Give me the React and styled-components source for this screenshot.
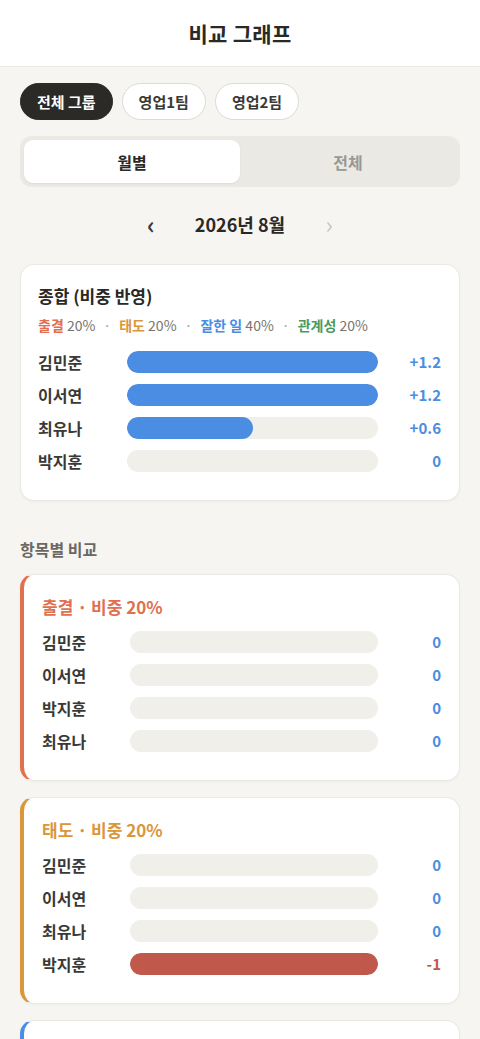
import React from "react";
import styled, { createGlobalStyle } from "styled-components";

const Global = createGlobalStyle`
  html, body { margin: 0; padding: 0; background: #f6f5f2; }
  body { font-family: "Noto Sans CJK KR", "Noto Sans", sans-serif; color: #2a2925; }
  * { box-sizing: border-box; }
`;

const Page = styled.div`
  width: 480px;
  min-height: 1039px;
  background: #f6f5f2;
`;

const Header = styled.header`
  height: 67px;
  background: #fff;
  border-bottom: 1px solid #ebe9e4;
  display: flex;
  align-items: center;
  justify-content: center;
`;

const Title = styled.h1`
  margin: 0;
  font-size: 21px;
  font-weight: 700;
  color: #2a2925;
  letter-spacing: 0.3px;
`;

const Content = styled.main`
  padding: 16px 20px 0;
  display: flex;
  flex-direction: column;
`;

const ChipRow = styled.div`
  display: flex;
  gap: 9px;
`;

const Chip = styled.button`
  height: 37px;
  padding: 0 16px;
  border-radius: 19px;
  font-family: inherit;
  font-size: 15px;
  font-weight: 700;
  border: 1px solid ${p => (p.$active ? "#2b2a26" : "#dddad4")};
  background: ${p => (p.$active ? "#2b2a26" : "#fff")};
  color: ${p => (p.$active ? "#fff" : "#3a3935")};
`;

const Segmented = styled.div`
  margin-top: 16px;
  height: 51px;
  background: #ebe9e4;
  border-radius: 12px;
  padding: 4px;
  display: grid;
  grid-template-columns: 1fr 1fr;
`;

const Segment = styled.div`
  border-radius: 9px;
  display: flex;
  align-items: center;
  justify-content: center;
  font-size: 16px;
  font-weight: 700;
  background: ${p => (p.$active ? "#fff" : "transparent")};
  color: ${p => (p.$active ? "#2a2925" : "#9a9893")};
  box-shadow: ${p => (p.$active ? "0 1px 2px rgba(0,0,0,0.06)" : "none")};
`;

const MonthNav = styled.div`
  margin-top: 22px;
  height: 30px;
  display: flex;
  align-items: center;
  justify-content: center;
  gap: 30px;
`;

const NavArrow = styled.span`
  font-size: 24px;
  line-height: 1;
  width: 14px;
  text-align: center;
  color: ${p => (p.$disabled ? "#c8c6c1" : "#3a3935")};
  font-weight: ${p => (p.$disabled ? 400 : 700)};
`;

const Month = styled.div`
  font-size: 18px;
  font-weight: 700;
  color: #2a2925;
  width: 104px;
  text-align: center;
  white-space: nowrap;
`;

const Card = styled.section`
  background: #fff;
  border-radius: 14px;
  border: 1px solid #ebe9e4;
  ${p => p.$accent && `border-left: 4px solid ${p.$accent};`}
  box-shadow: 0 1px 3px rgba(0, 0, 0, 0.04);
  padding: ${p => (p.$accent ? "20px 18px 28px 18px" : "19px 18px 28px 17px")};
`;

const SummaryCard = styled(Card)`
  margin-top: 25px;
`;

const CardTitle = styled.h2`
  margin: 0;
  font-size: 17px;
  font-weight: 700;
  line-height: 24px;
  color: ${p => p.$color || "#2a2925"};
`;

const Legend = styled.div`
  margin-top: 7px;
  font-size: 14px;
  line-height: 20px;
  color: #77756f;
  display: flex;
  align-items: center;
  white-space: nowrap;
`;

const LegendName = styled.span`
  color: ${p => p.$color};
  font-weight: 700;
`;

const Dot = styled.span`
  margin: 0 8px;
  color: #a9a7a1;
`;

const Rows = styled.div`
  margin-top: ${p => p.$top || 14}px;
  display: flex;
  flex-direction: column;
  gap: 11px;
`;

const Row = styled.div`
  display: grid;
  grid-template-columns: ${p => p.$nameW}px 1fr 63px;
  align-items: center;
  height: 22px;
`;

const Name = styled.div`
  font-size: 16px;
  line-height: 22px;
  font-weight: 700;
  color: #3a3935;
`;

const Track = styled.div`
  height: 22px;
  border-radius: 11px;
  background: #f0efea;
  overflow: hidden;
`;

const Fill = styled.div`
  height: 100%;
  border-radius: 11px;
  background: ${p => p.$color};
`;

const Value = styled.div`
  text-align: right;
  font-size: 15px;
  line-height: 22px;
  font-weight: 700;
  color: ${p => p.$color};
`;

const SectionLabel = styled.h3`
  margin: 37px 0 14px;
  font-size: 16px;
  line-height: 22px;
  font-weight: 700;
  color: #6a6863;
`;

const CategoryList = styled.div`
  display: flex;
  flex-direction: column;
  gap: 16px;
`;

const BLUE = "#4a8de3";
const RED = "#c0594b";

const summary = [
  { name: "김민준", v: 1.2 },
  { name: "이서연", v: 1.2 },
  { name: "최유나", v: 0.6 },
  { name: "박지훈", v: 0 },
];

const categories = [
  {
    title: "출결 · 비중 20%",
    color: "#e0704f",
    rows: [
      { name: "김민준", v: 0 },
      { name: "이서연", v: 0 },
      { name: "박지훈", v: 0 },
      { name: "최유나", v: 0 },
    ],
  },
  {
    title: "태도 · 비중 20%",
    color: "#d9973a",
    rows: [
      { name: "김민준", v: 0 },
      { name: "이서연", v: 0 },
      { name: "최유나", v: 0 },
      { name: "박지훈", v: -1 },
    ],
  },
  {
    title: "잘한 일 · 비중 40%",
    color: "#4a8de3",
    rows: [
      { name: "김민준", v: 1 },
      { name: "이서연", v: 1 },
      { name: "최유나", v: 0.5 },
      { name: "박지훈", v: 0 },
    ],
  },
];

const fmt = v => (v > 0 ? `+${v}` : `${v}`);

function BarRow({ name, v, max, nameW }) {
  const neg = v < 0;
  const pct = Math.min(100, (Math.abs(v) / max) * 100);
  return (
    <Row $nameW={nameW}>
      <Name>{name}</Name>
      <Track>{pct > 0 && <Fill $color={neg ? RED : BLUE} style={{ width: `${pct}%` }} />}</Track>
      <Value $color={neg ? RED : BLUE}>{fmt(v)}</Value>
    </Row>
  );
}

export default function App() {
  return (
    <Page>
      <Global />
      <Header>
        <Title>비교 그래프</Title>
      </Header>
      <Content>
        <ChipRow>
          <Chip $active>전체 그룹</Chip>
          <Chip>영업1팀</Chip>
          <Chip>영업2팀</Chip>
        </ChipRow>
        <Segmented>
          <Segment $active>월별</Segment>
          <Segment>전체</Segment>
        </Segmented>
        <MonthNav>
          <NavArrow>‹</NavArrow>
          <Month>2026년 8월</Month>
          <NavArrow $disabled>›</NavArrow>
        </MonthNav>
        <SummaryCard>
          <CardTitle>종합 (비중 반영)</CardTitle>
          <Legend>
            <LegendName $color="#e0704f">출결</LegendName>&nbsp;20%
            <Dot>·</Dot>
            <LegendName $color="#d9973a">태도</LegendName>&nbsp;20%
            <Dot>·</Dot>
            <LegendName $color="#4a8de3">잘한 일</LegendName>&nbsp;40%
            <Dot>·</Dot>
            <LegendName $color="#4a9a5e">관계성</LegendName>&nbsp;20%
          </Legend>
          <Rows $top={16}>
            {summary.map(r => (
              <BarRow key={r.name} {...r} max={1.2} nameW={89} />
            ))}
          </Rows>
        </SummaryCard>
        <SectionLabel>항목별 비교</SectionLabel>
        <CategoryList>
          {categories.map(c => (
            <Card key={c.title} $accent={c.color}>
              <CardTitle $color={c.color}>{c.title}</CardTitle>
              <Rows $top={12}>
                {c.rows.map(r => (
                  <BarRow key={r.name} {...r} max={1} nameW={88} />
                ))}
              </Rows>
            </Card>
          ))}
        </CategoryList>
      </Content>
    </Page>
  );
}
